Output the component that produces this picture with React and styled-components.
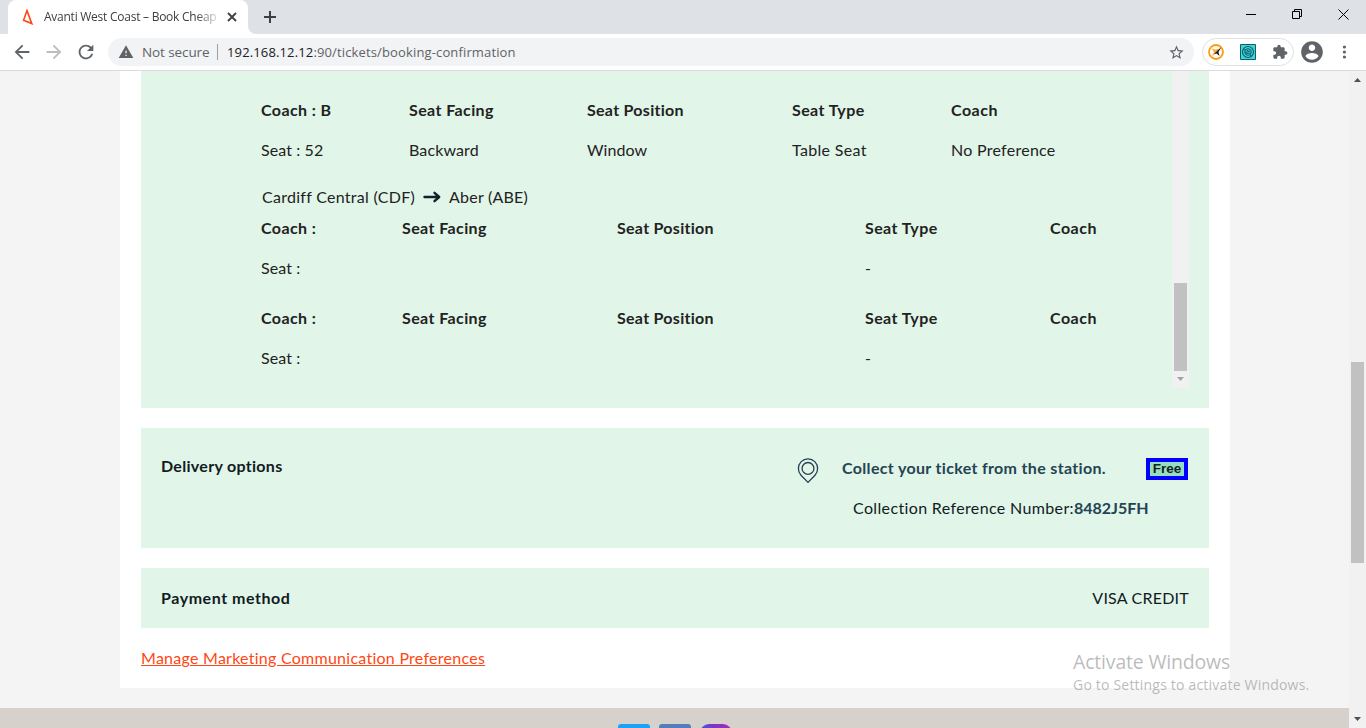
import React from 'react';
import styled, { createGlobalStyle } from 'styled-components';

const Global = createGlobalStyle`
  * { box-sizing: border-box; }
  body { margin: 0; overflow: hidden; }
`;

const ui = `"Open Sans", "Noto Sans", sans-serif`;
const brand = `Lato, "Open Sans", sans-serif`;

const Window = styled.div`
  width: 1366px;
  height: 728px;
  display: flex;
  flex-direction: column;
  position: relative;
  overflow: hidden;
  background: #fff;
  font-family: ${brand};
`;

const TabStrip = styled.div`
  height: 34px;
  flex: none;
  display: flex;
  background: #dee1e6;
  padding-left: 8px;
`;

const Tab = styled.div`
  width: 240px;
  height: 34px;
  display: flex;
  align-items: center;
  background: #fff;
  border-radius: 8px 8px 0 0;
  padding-left: 12px;
`;

const TabTitle = styled.div`
  width: 174px;
  margin-left: 8px;
  white-space: nowrap;
  font: 12px/18px ${ui};
  letter-spacing: ${p => p.$ls}px;
  color: #3c4043;
  mask-image: linear-gradient(to right, #000 152px, transparent 178px);
`;

const TabFoot = styled.svg`
  width: 8px;
  height: 8px;
  align-self: flex-end;
`;

const WindowButtons = styled.div`
  margin-left: auto;
  display: flex;
  height: 29px;
`;

const WindowButton = styled.div`
  width: 46px;
  padding-left: 1px;
  display: flex;
  align-items: center;
  justify-content: center;
`;

const Toolbar = styled.div`
  height: 37px;
  flex: none;
  display: flex;
  align-items: center;
  background: #fff;
  border-bottom: 1px solid #d9dbde;
  padding: 0 10px 0 10px;
`;

const NavButton = styled.div`
  width: 24px;
  height: 24px;
  margin-right: ${p => (p.$last ? 0 : 8)}px;
  margin-left: ${p => p.$ml || 0}px;
  display: flex;
  align-items: center;
  justify-content: center;
`;

const Address = styled.div`
  width: 1086px;
  height: 28px;
  margin-left: 2px;
  border-radius: 14px;
  background: #f1f3f4;
  display: flex;
  align-items: center;
  padding: 0 9px 0 10px;
  font: 14px/20px ${ui};
  color: #5f6368;
  white-space: nowrap;
`;

const Secure = styled.span`
  width: 67px;
  margin-left: 8px;
  font-size: 13.5px;
  letter-spacing: -0.1px;
`;

const AddressRule = styled.span`
  width: 1px;
  height: 16px;
  margin: 0 9px 0 8px;
  background: #9aa0a6;
`;

const Url = styled.span`
  flex: 1;
  font-size: 13px;
  letter-spacing: ${p => p.$ls}px;
  b { font-weight: 400; color: #202124; }
`;

const Extensions = styled.div`
  width: 92px;
  height: 28px;
  margin-left: 8px;
  border: 1px solid #dfe1e4;
  border-radius: 14px;
  display: flex;
  align-items: center;
  gap: 16px;
  padding-left: 5px;
`;

const Viewport = styled.div`
  flex: 1;
  display: flex;
  min-height: 0;
`;

const Page = styled.div`
  width: 1349px;
  background: #f4f4f4;
  display: flex;
  flex-direction: column;
`;

const Main = styled.main`
  width: 1110px;
  height: 617px;
  margin-left: 120px;
  padding: 0 21px;
  background: #fff;
  display: flex;
  flex-direction: column;
  gap: 20px;
`;

const Panel = styled.section`
  height: ${p => p.$h}px;
  flex: none;
  background: #e1f5e8;
  display: flex;
  justify-content: space-between;
`;

const Seats = styled.div`
  width: 1000px;
  padding: 29px 0 0 120px;
  color: #222;
`;

const SeatGrid = styled.div`
  display: grid;
  grid-template-columns: ${p => p.$cols};
  row-gap: 20px;
  margin-bottom: ${p => p.$mb}px;
`;

const Text = styled.span`
  display: block;
  font-size: 16px;
  line-height: 20px;
  height: 20px;
  white-space: nowrap;
  font-weight: ${p => (p.$bold ? 700 : 400)};
  letter-spacing: ${p => p.$ls || 0}px;
  color: ${p => p.$color || 'inherit'};
`;

const Journey = styled.div`
  display: flex;
  align-items: center;
  gap: 8px;
  padding-left: 1px;
  margin-bottom: 11px;
`;

const InnerScroll = styled.div`
  width: 17px;
  height: 317px;
  margin-right: 20px;
  background: #f1f1f1;
  display: flex;
  flex-direction: column;
  align-items: center;
  justify-content: flex-end;
`;

const Thumb = styled.div`
  width: 13px;
  height: ${p => p.$h}px;
  background: #c1c1c1;
`;

const ArrowBox = styled.div`
  width: 17px;
  height: 17px;
  padding: ${p => (p.$up ? '1px 0 0' : '0 0 1px')};
  display: flex;
  align-items: center;
  justify-content: center;
`;

const PageScroll = styled.div`
  width: 17px;
  background: #f1f1f1;
  display: flex;
  flex-direction: column;
  align-items: center;
`;

const ThumbGap = styled.div`
  height: ${p => p.$h}px;
`;

const PanelTitle = styled.div`
  padding: ${p => p.$top}px 0 0 20px;
  color: #111b24;
`;

const Delivery = styled.div`
  width: 412px;
  padding: 30px 21px 0 0;
`;

const DeliveryLine = styled.div`
  display: flex;
  align-items: flex-start;
  height: 40px;
`;

const DeliveryText = styled.div`
  margin-left: 23px;
  flex: 1;
  color: #244453;
`;

const Free = styled.div`
  width: 42px;
  height: 22px;
  border: 4px solid #00f;
  background: #94e0be;
  font: bold 13.5px/14px "Liberation Sans", Arial, sans-serif;
  text-align: center;
  color: #142026;
`;

const Reference = styled.div`
  display: flex;
  margin-left: 56px;
  color: #111b24;
`;

const Payment = styled.div`
  padding: 20px 20px 0 0;
  color: #111b24;
`;

const Manage = styled.a`
  display: block;
  font-size: 16px;
  line-height: 20px;
  letter-spacing: ${p => p.$ls}px;
  color: #ff4713;
  text-decoration: underline;
`;

const Footer = styled.footer`
  height: 20px;
  margin-top: 20px;
  background: #d6d1ca;
  display: flex;
  gap: 9px;
  padding: 16px 0 0 618px;
  overflow: hidden;
`;

const Social = styled.div`
  width: 32px;
  height: 32px;
  border-radius: ${p => p.$r}px;
  background: ${p => p.$bg};
`;

const Watermark = styled.div`
  position: absolute;
  left: 1073px;
  top: 649px;
  font-family: ${ui};
  white-space: nowrap;
  color: rgba(120, 120, 120, 0.5);
`;

const WatermarkTitle = styled.div`
  font-size: 19.5px;
  line-height: 26px;
  letter-spacing: ${p => p.$ls}px;
`;

const WatermarkNote = styled.div`
  font-size: 14px;
  line-height: 20px;
  letter-spacing: ${p => p.$ls}px;
`;

const Triangle = ({ up, color }) => (
  <svg width="7" height="4" viewBox="0 0 7 4">
    <path d={up ? 'M0 4L3.5 0L7 4Z' : 'M0 0L3.5 4L7 0Z'} fill={color} />
  </svg>
);

const Stroke = ({ size, d, color = '#5f6368', w = 2 }) => (
  <svg width={size} height={size} viewBox={`0 0 ${size} ${size}`} fill="none" stroke={color} strokeWidth={w}>
    <path d={d} />
  </svg>
);

const GlyphSvg = styled.svg`
  flex: none;
`;

const Glyph = ({ size, d, color = '#5f6368' }) => (
  <GlyphSvg width={size} height={size} viewBox="0 0 24 24" fill={color}>
    <path d={d} />
  </GlyphSvg>
);

const HEADS = [
  ['Seat Facing', 0.4],
  ['Seat Position', 0.28],
  ['Seat Type', 0.4],
  ['Coach', 0.5],
];

const SeatTable = ({ cols, mb, coach, seat, values }) => (
  <SeatGrid $cols={cols} $mb={mb}>
    <Text $bold $ls={0.4}>{coach}</Text>
    {HEADS.map(([label, ls]) => <Text key={label} $bold $ls={ls}>{label}</Text>)}
    <Text $ls={0.1}>{seat}</Text>
    {values.map(([label, ls], i) => <Text key={i} $ls={ls}>{label}</Text>)}
  </SeatGrid>
);

const WIDE = '141px 215px 248px 185px 1fr';
const BOOKED = [['Backward', 0.12], ['Window', 0.05], ['Table Seat', 0.32], ['No Preference', 0.27]];
const UNBOOKED = [['', 0], ['', 0], ['-', 0], ['', 0]];

export default function App() {
  return (
    <Window>
      <Global />
      <TabStrip>
        <Tab>
          <svg width="16" height="16" viewBox="0 0 16 16" fill="none" stroke="#ff4713" strokeWidth="1.6">
            <path d="M7 1.6L3.6 11.2L11.8 14.6Z" />
          </svg>
          <TabTitle $ls={-0.25}>Avanti West Coast – Book Cheap</TabTitle>
          <Stroke size={28} d="M10 10L18 18M18 10L10 18" color="#3c4043" w={1.8} />
        </Tab>
        <TabFoot viewBox="0 0 8 8"><path d="M0 0A8 8 0 0 0 8 8H0Z" fill="#fff" /></TabFoot>
        <Stroke size={28} d="M14 11V23M8 17H20" color="#3c4043" w={2} />
        <WindowButtons>
          <WindowButton><Stroke size={11} d="M0 5.5H10" color="#000" w={1} /></WindowButton>
          <WindowButton><Stroke size={11} d="M.5 2.5H7.5V9.5H.5ZM2.5 2.5V.5H9.5V7.5H7.5" color="#000" w={1} /></WindowButton>
          <WindowButton><Stroke size={11} d="M.5 .5L10.5 10.5M10.5 .5L.5 10.5" color="#000" w={1} /></WindowButton>
        </WindowButtons>
      </TabStrip>
      <Toolbar>
        <NavButton><Glyph size={22} d="M20 11H7.83l5.59-5.59L12 4l-8 8 8 8 1.41-1.41L7.83 13H20v-2z" /></NavButton>
        <NavButton><Glyph size={22} color="#babcbe" d="M12 4l-1.41 1.41L16.17 11H4v2h12.17l-5.58 5.59L12 20l8-8z" /></NavButton>
        <NavButton><Glyph size={22} d="M17.65 6.35C16.2 4.9 14.21 4 12 4c-4.42 0-7.99 3.58-7.99 8s3.57 8 7.99 8c3.73 0 6.84-2.55 7.73-6h-2.08c-.82 2.33-3.04 4-5.65 4-3.31 0-6-2.69-6-6s2.69-6 6-6c1.66 0 3.14.69 4.22 1.78L13 11h7V4l-2.35 2.35z" /></NavButton>
        <Address>
          <Glyph size={16} d="M1 21h22L12 2 1 21zm12-3h-2v-2h2v2zm0-4h-2v-4h2v4z" />
          <Secure>Not secure</Secure>
          <AddressRule />
          <Url $ls={0.14}><b>192.168.12.12</b>:90/tickets/booking-confirmation</Url>
          <Glyph size={17} d="M22 9.24l-7.19-.62L12 2 9.19 8.63 2 9.24l5.46 4.73L5.82 21 12 17.27 18.18 21l-1.63-7.03L22 9.24zM12 15.4l-3.76 2.27 1-4.28-3.32-2.88 4.38-.38L12 6.1l1.71 4.04 4.38.38-3.32 2.88 1 4.28L12 15.4z" />
        </Address>
        <Extensions>
          <svg width="16" height="16" viewBox="0 0 16 16" fill="none">
            <circle cx="8" cy="8" r="7" fill="#fff" stroke="#ff9c17" strokeWidth="1.8" />
            <path d="M3.5 4.5L7 5.5L12 4.5L9 9L4 12L6 8Z" fill="#ffab32" />
            <path d="M13.5 3L8 8L6 10L8.5 9.5L11.5 12L10.5 8Z" fill="#222" />
          </svg>
          <svg width="16" height="16" viewBox="0 0 16 16" fill="none" stroke="#145d68">
            <path d="M.5 .5H15.5V15.5H.5Z" fill="#38d5df" />
            <circle cx="8" cy="8" r="5.5" strokeWidth="1.2" />
            <circle cx="8" cy="8" r="3.3" strokeWidth="1" />
            <path d="M5 8.8L10.5 6.8M6.3 9.5L10.5 9M6.5 6.8L8.5 6M3.5 5L5.5 6.5M10 11L12 12.5" strokeWidth="1" />
          </svg>
          <Glyph size={16} d="M20.5 11H19V7c0-1.1-.9-2-2-2h-4V3.5C13 2.12 11.88 1 10.5 1S8 2.12 8 3.5V5H4c-1.1 0-1.99.9-1.99 2v3.8H3.5c1.49 0 2.7 1.21 2.7 2.7s-1.21 2.7-2.7 2.7H2V20c0 1.1.9 2 2 2h3.8v-1.5c0-1.49 1.21-2.7 2.7-2.7 1.49 0 2.7 1.21 2.7 2.7V22H17c1.1 0 2-.9 2-2v-4h1.5c1.38 0 2.5-1.12 2.5-2.5S21.88 11 20.5 11z" />
        </Extensions>
        <NavButton $ml={6}>
          <Glyph size={26} d="M12 2C6.48 2 2 6.48 2 12s4.48 10 10 10 10-4.48 10-10S17.52 2 12 2zm0 3c1.66 0 3 1.34 3 3s-1.34 3-3 3-3-1.34-3-3 1.34-3 3-3zm0 14.2c-2.5 0-4.71-1.28-6-3.22.03-1.99 4-3.08 6-3.08 1.99 0 5.97 1.09 6 3.08-1.29 1.94-3.5 3.22-6 3.22z" />
        </NavButton>
        <NavButton $last>
          <svg width="4" height="14" viewBox="0 0 4 14" fill="#5f6368">
            <circle cx="2.4" cy="2" r="1.6" /><circle cx="2.4" cy="7" r="1.6" /><circle cx="2.4" cy="12" r="1.6" />
          </svg>
        </NavButton>
      </Toolbar>
      <Viewport>
        <Page>
          <Main>
            <Panel $h={337}>
              <Seats>
                <SeatTable cols="148px 178px 205px 159px 1fr" mb={27} coach="Coach : B" seat="Seat : 52" values={BOOKED} />
                <Journey>
                  <Text $ls={0.28}>Cardiff Central (CDF)</Text>
                  <svg width="18" height="14" viewBox="0 0 18 14" fill="none" stroke="#142029" strokeWidth="2.4" strokeLinecap="round" strokeLinejoin="round">
                    <path d="M1.5 7H16M11.5 2.8L16.2 7L11.5 11.2" />
                  </svg>
                  <Text $ls={0.22}>Aber (ABE)</Text>
                </Journey>
                <SeatTable cols={WIDE} mb={30} coach="Coach :" seat="Seat :" values={UNBOOKED} />
                <SeatTable cols={WIDE} mb={0} coach="Coach :" seat="Seat :" values={UNBOOKED} />
              </Seats>
              <InnerScroll>
                <Thumb $h={88} />
                <ArrowBox><Triangle color="#a3a3a3" /></ArrowBox>
              </InnerScroll>
            </Panel>
            <Panel $h={120}>
              <PanelTitle $top={28}><Text $bold $ls={0.3}>Delivery options</Text></PanelTitle>
              <Delivery>
                <DeliveryLine>
                  <svg width="22" height="26" viewBox="0 0 22 26" fill="none" stroke="#244453" strokeWidth="1.3">
                    <path d="M11 24.4L4 17.2C2.2 15.3 1.4 13 1.4 10.4A9.6 9.6 0 0 1 20.6 10.4C20.6 13 19.8 15.3 18 17.2Z" />
                    <circle cx="11" cy="10.4" r="5.9" />
                  </svg>
                  <DeliveryText><Text $bold $ls={0.33}>Collect your ticket from the station.</Text></DeliveryText>
                  <Free>Free</Free>
                </DeliveryLine>
                <Reference>
                  <Text $ls={0.36}>Collection Reference Number:</Text>
                  <Text $bold $color="#244453">8482J5FH</Text>
                </Reference>
              </Delivery>
            </Panel>
            <Panel $h={60}>
              <PanelTitle $top={20}><Text $bold $ls={0.55}>Payment method</Text></PanelTitle>
              <Payment><Text $ls={0.22}>VISA CREDIT</Text></Payment>
            </Panel>
            <div><Manage $ls={0.26}>Manage Marketing Communication Preferences</Manage></div>
          </Main>
          <Footer>
            <Social $r={3} $bg="#1da1f2" />
            <Social $r={3} $bg="#557dbc" />
            <Social $r={9} $bg="linear-gradient(to right, #3f5bd6, #7a35c8 45%, #b02bb0)" />
          </Footer>
        </Page>
        <PageScroll>
          <ArrowBox $up><Triangle up color="#505050" /></ArrowBox>
          <ThumbGap $h={274} />
          <Thumb $h={201} />
          <ThumbGap $h={148} />
          <ArrowBox><Triangle color="#505050" /></ArrowBox>
        </PageScroll>
      </Viewport>
      <Watermark>
        <WatermarkTitle $ls={-0.18}>Activate Windows</WatermarkTitle>
        <WatermarkNote $ls={0.2}>Go to Settings to activate Windows.</WatermarkNote>
      </Watermark>
    </Window>
  );
}
